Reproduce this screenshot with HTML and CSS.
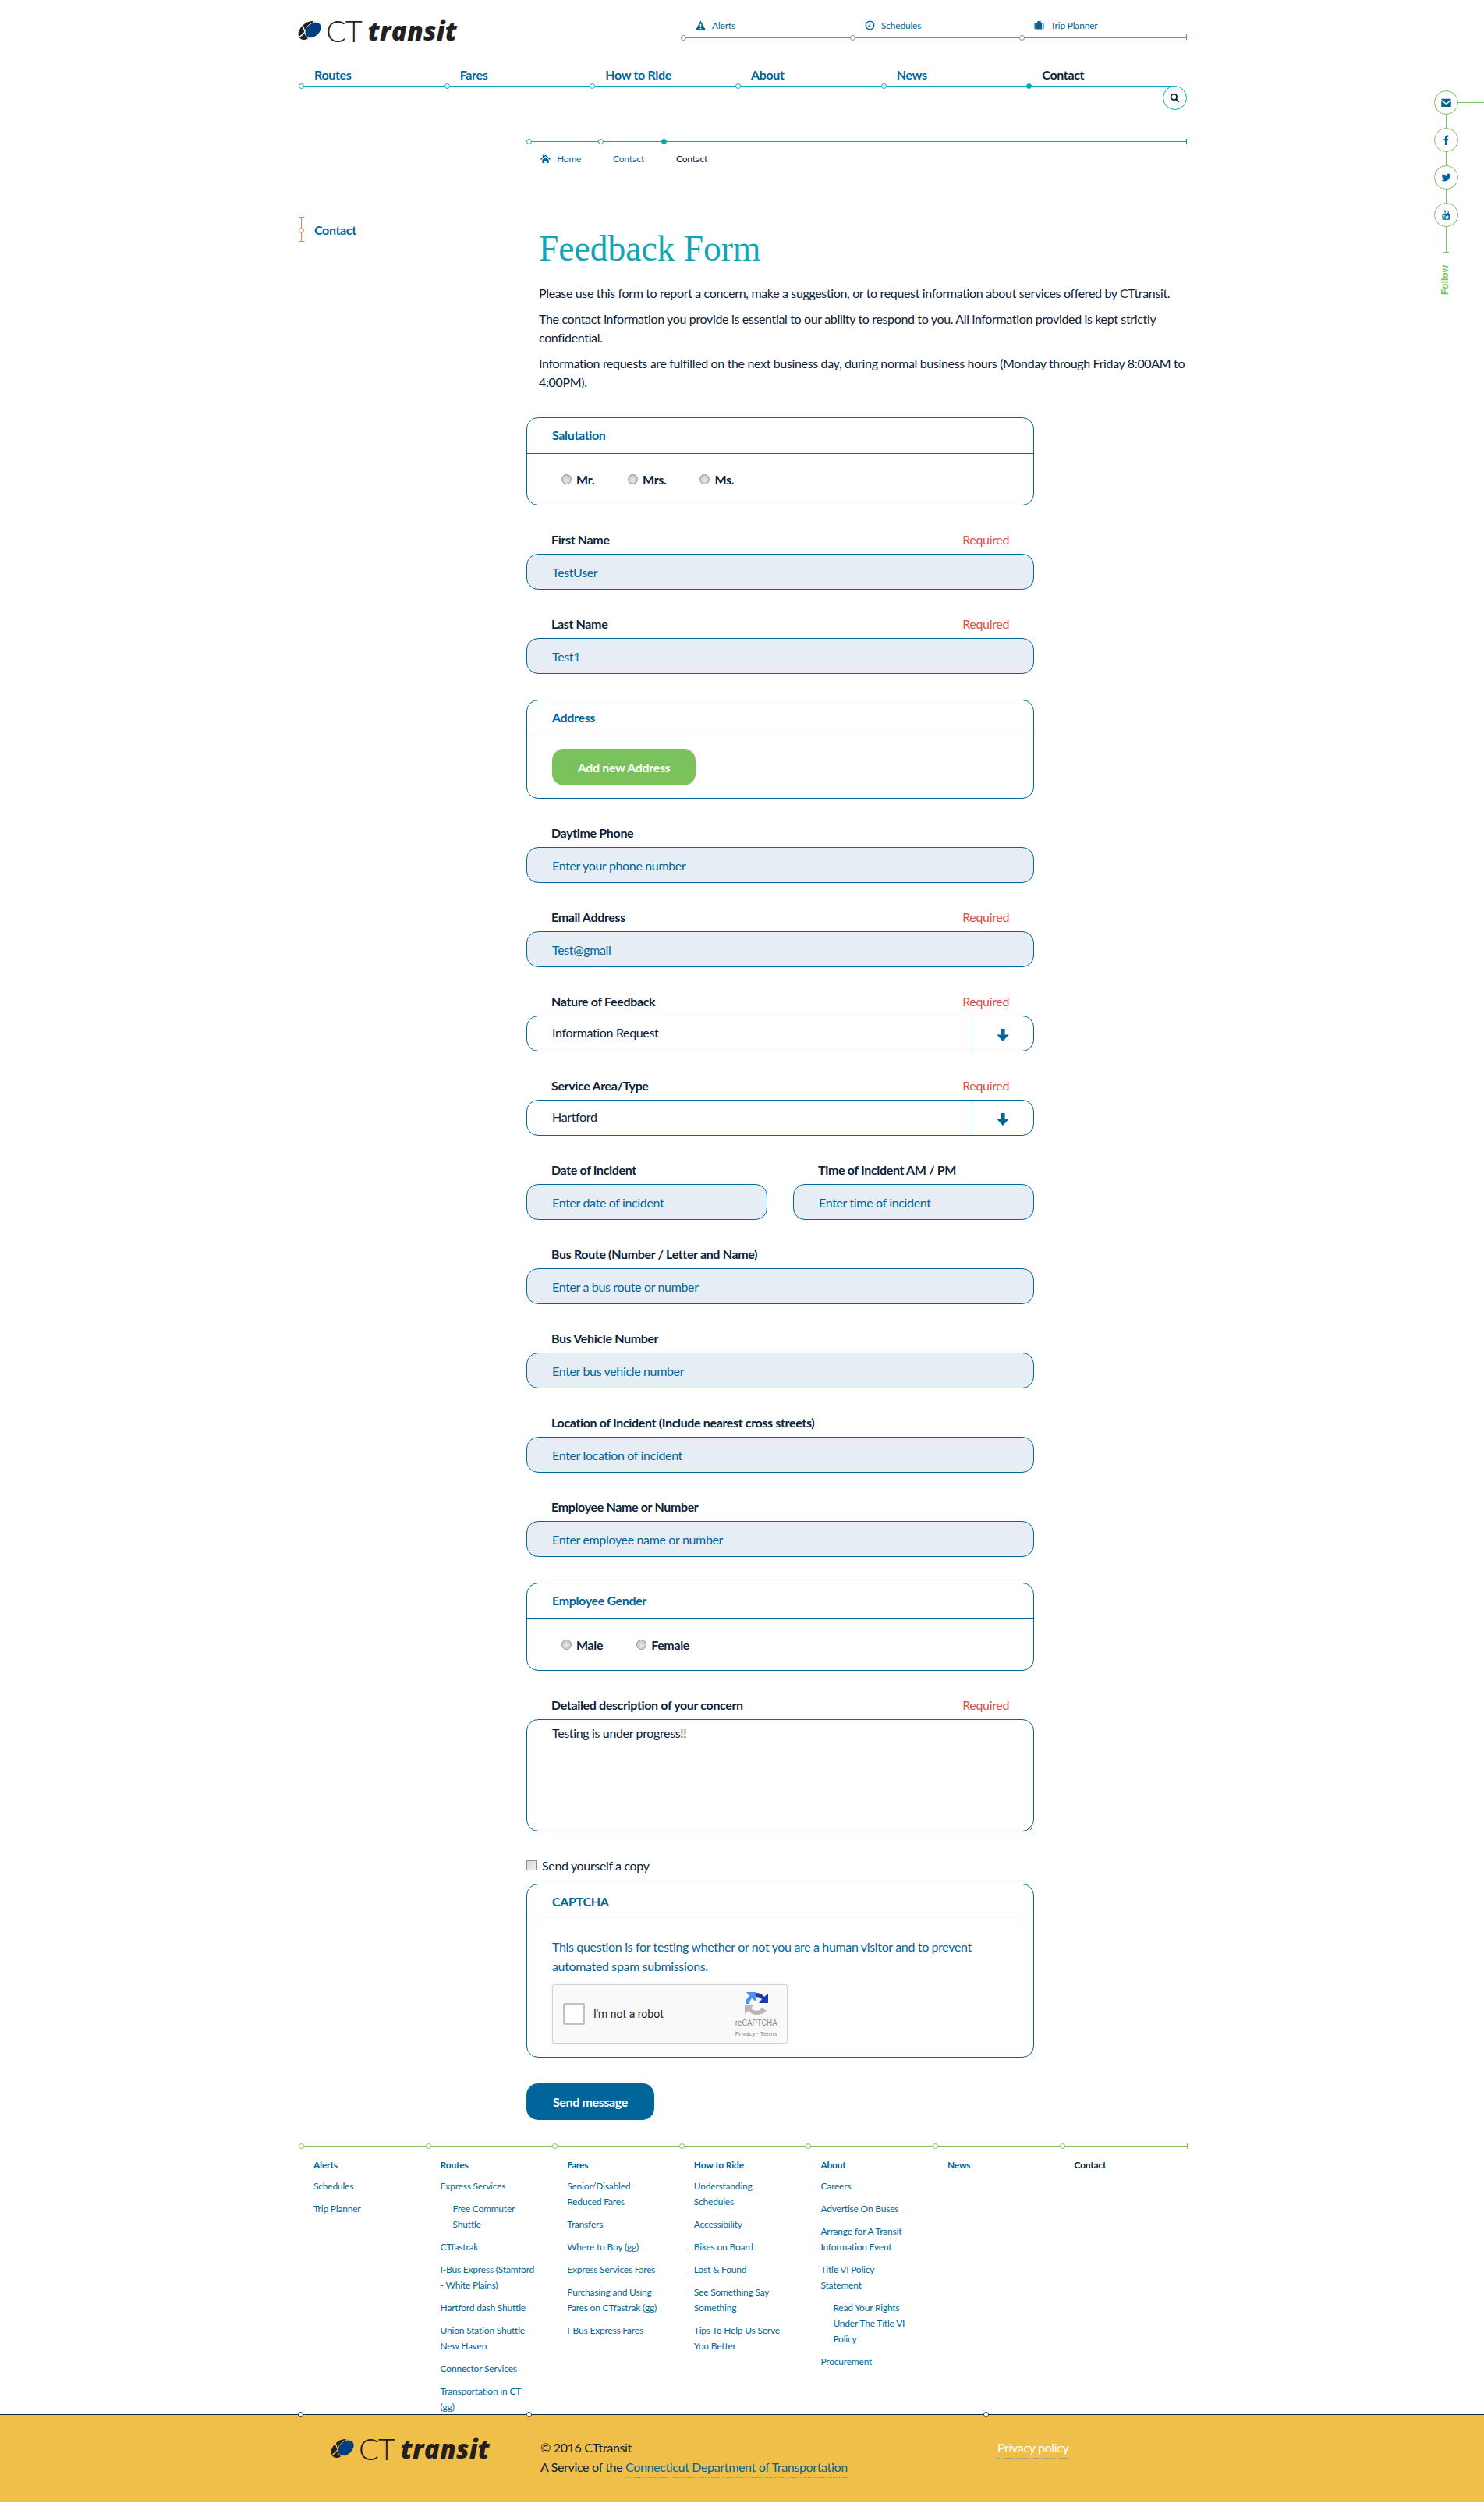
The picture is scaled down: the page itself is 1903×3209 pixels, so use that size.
FILE: index.html
```html
<!DOCTYPE html>
<html>

<head>
  <meta charset="utf-8">
  <title>Feedback Form</title>
  <link rel="stylesheet" href="styles.css">
</head>

<body>
  <div class="page">
    <header class="top">
      <a class="logo" href="#">
        <svg class="logo-mark" viewBox="0 0 30 26">
          <ellipse cx="13" cy="13" rx="14.5" ry="9.5" fill="#231f20" transform="rotate(-42 13 13)" />
          <path d="M5 0 Q7 14 15 26 M0 23 Q10 16 21 1" stroke="#fff" stroke-width="1.4" fill="none" />
          <ellipse cx="19.5" cy="12.5" rx="12" ry="8.5" fill="#003f7f" stroke="#fff" stroke-width="0.8" transform="rotate(-42 19.5 12.5)" />
        </svg>
        <span class="logo-ct">CT</span>
        <span class="logo-transit">transit</span>
      </a>
      <ul class="util">
        <li>
          <svg class="ico" viewBox="0 0 14 14"><path fill-rule="evenodd" d="M7 0.5 L14 13.5 H0 Z M6 5 L6.3 9.5 H7.7 L8 5 Z M6.1 10.5 V12.2 H7.9 V10.5 Z" /></svg>
          <a href="#">Alerts</a>
        </li>
        <li>
          <svg class="ico" viewBox="0 0 14 14"><circle cx="7" cy="7" r="5.6" fill="none" stroke="#00659b" stroke-width="1.6" /><path d="M7 3.6 V7.6 H4.6" fill="none" stroke="#00659b" stroke-width="1.4" /></svg>
          <a href="#">Schedules</a>
        </li>
        <li>
          <svg class="ico" viewBox="0 0 14 14"><path d="M0.5 5 Q0.5 3.5 2 3.5 V12.5 Q0.5 12.5 0.5 11 Z M3 3.5 H4.5 V2 Q4.5 1 5.5 1 H8.5 Q9.5 1 9.5 2 V3.5 H11 V12.5 H3 Z M12 3.5 Q13.5 3.5 13.5 5 V11 Q13.5 12.5 12 12.5 Z" /></svg>
          <a href="#">Trip Planner</a>
        </li>
      </ul>
    </header>

    <nav class="main-nav">
      <ul>
        <li><a href="#">Routes</a></li>
        <li><a href="#">Fares</a></li>
        <li><a href="#">How to Ride</a></li>
        <li><a href="#">About</a></li>
        <li><a href="#">News</a></li>
        <li class="current"><a href="#">Contact</a></li>
      </ul>
      <button class="search-btn" aria-label="Search">
        <svg viewBox="0 0 14 14"><circle cx="5.8" cy="5.8" r="4" fill="none" stroke="#0b2239" stroke-width="2" /><path d="M8.8 8.8 L12.6 12.6" stroke="#0b2239" stroke-width="2.4" /></svg>
      </button>
    </nav>

    <ul class="crumbs">
      <li>
        <svg class="ico" viewBox="0 0 14 14"><path d="M7 1.5 L14 7.6 L13 8.6 L7 3.4 L1 8.6 L0 7.6 L3 5 V2 H4.8 V3.4 Z M2.5 8.6 L7 4.8 L11.5 8.6 V13 H8.4 V9.8 H5.6 V13 H2.5 Z" /></svg>
        <a href="#">Home</a>
      </li>
      <li><a href="#">Contact</a></li>
      <li class="current"><a href="#">Contact</a></li>
    </ul>

    <div class="layout">
      <aside class="side">
        <a href="#">Contact</a>
      </aside>

      <main class="content">
        <h1>Feedback Form</h1>
        <p class="intro">Please use this form to report a concern, make a suggestion, or to request information about services offered by CTtransit.</p>
        <p class="intro">The contact information you provide is essential to our ability to respond to you. All information provided is kept strictly confidential.</p>
        <p class="intro last">Information requests are fulfilled on the next business day, during normal business hours (Monday through Friday 8:00AM to 4:00PM).</p>

        <form>
          <fieldset class="box">
            <legend class="box-title">Salutation</legend>
            <div class="radios">
              <label><input type="radio" name="sal"> Mr.</label>
              <label><input type="radio" name="sal"> Mrs.</label>
              <label><input type="radio" name="sal"> Ms.</label>
            </div>
          </fieldset>

          <div class="field">
            <div class="field-label"><label>First Name</label><span class="req">Required</span></div>
            <input class="text" value="TestUser">
          </div>
          <div class="field">
            <div class="field-label"><label>Last Name</label><span class="req">Required</span></div>
            <input class="text" value="Test1">
          </div>

          <fieldset class="box">
            <legend class="box-title">Address</legend>
            <div class="box-body">
              <button type="button" class="btn-green">Add new Address</button>
            </div>
          </fieldset>

          <div class="field">
            <div class="field-label"><label>Daytime Phone</label></div>
            <input class="text" placeholder="Enter your phone number">
          </div>
          <div class="field">
            <div class="field-label"><label>Email Address</label><span class="req">Required</span></div>
            <input class="text" value="Test@gmail">
          </div>
          <div class="field">
            <div class="field-label"><label>Nature of Feedback</label><span class="req">Required</span></div>
            <div class="select">
              <span>Information Request</span>
              <div class="select-arrow"><svg viewBox="0 0 16 16"><path d="M5.4 0 H10.6 V7.5 H15.8 L8 16 L0.2 7.5 H5.4 Z" /></svg></div>
            </div>
          </div>
          <div class="field">
            <div class="field-label"><label>Service Area/Type</label><span class="req">Required</span></div>
            <div class="select">
              <span>Hartford</span>
              <div class="select-arrow"><svg viewBox="0 0 16 16"><path d="M5.4 0 H10.6 V7.5 H15.8 L8 16 L0.2 7.5 H5.4 Z" /></svg></div>
            </div>
          </div>

          <div class="field-pair">
            <div class="field">
              <div class="field-label"><label>Date of Incident</label></div>
              <input class="text" placeholder="Enter date of incident">
            </div>
            <div class="field">
              <div class="field-label"><label>Time of Incident AM / PM</label></div>
              <input class="text" placeholder="Enter time of incident">
            </div>
          </div>

          <div class="field">
            <div class="field-label"><label>Bus Route (Number / Letter and Name)</label></div>
            <input class="text" placeholder="Enter a bus route or number">
          </div>
          <div class="field">
            <div class="field-label"><label>Bus Vehicle Number</label></div>
            <input class="text" placeholder="Enter bus vehicle number">
          </div>
          <div class="field">
            <div class="field-label"><label>Location of Incident (Include nearest cross streets)</label></div>
            <input class="text" placeholder="Enter location of incident">
          </div>
          <div class="field">
            <div class="field-label"><label>Employee Name or Number</label></div>
            <input class="text" placeholder="Enter employee name or number">
          </div>

          <fieldset class="box">
            <legend class="box-title">Employee Gender</legend>
            <div class="radios">
              <label><input type="radio" name="gen"> Male</label>
              <label><input type="radio" name="gen"> Female</label>
            </div>
          </fieldset>

          <div class="field narrow">
            <div class="field-label"><label>Detailed description of your concern</label><span class="req">Required</span></div>
            <textarea class="area">Testing is under progress!!</textarea>
          </div>

          <label class="copy"><input type="checkbox"> Send yourself a copy</label>

          <fieldset class="box captcha">
            <legend class="box-title">CAPTCHA</legend>
            <div class="captcha-body">
              <p>This question is for testing whether or not you are a human visitor and to prevent automated spam submissions.</p>
              <div class="recaptcha">
                <span class="rc-check"></span>
                <span class="rc-label">I'm not a robot</span>
                <div class="rc-brand">
                  <svg viewBox="0 0 30 30">
                    <path d="M0 16 H12 L8 21 Q11 24 15 24 Q19 24 22 20 L28 24 Q23 29 15 29 Q9 29 5 24 L0 28 Z" fill="#b8b8b8" />
                    <path d="M1 15 Q1 9 6 5 L2 0 H14 V12 L9 8 Q6 11 6 15 Z" fill="#4a90f5" />
                    <path d="M15 1 Q21 1 25 6 L30 2 V14 H18 L22 9 Q19 6 15 6 Z" fill="#1c3aa9" />
                  </svg>
                  <span class="rc-name">reCAPTCHA</span>
                  <span class="rc-terms">Privacy - Terms</span>
                </div>
              </div>
            </div>
          </fieldset>

          <button type="button" class="btn-send">Send message</button>
        </form>
      </main>
    </div>

    <footer class="site-map">
      <div class="map-col">
        <h4>Alerts</h4>
        <ul>
          <li><a href="#">Schedules</a></li>
          <li><a href="#">Trip Planner</a></li>
        </ul>
      </div>
      <div class="map-col">
        <h4>Routes</h4>
        <ul>
          <li><a href="#">Express Services</a></li>
          <li class="sub"><a href="#">Free Commuter Shuttle</a></li>
          <li><a href="#">CTfastrak</a></li>
          <li><a href="#">I-Bus Express (Stamford - White Plains)</a></li>
          <li><a href="#">Hartford dash Shuttle</a></li>
          <li><a href="#">Union Station Shuttle New Haven</a></li>
          <li><a href="#">Connector Services</a></li>
          <li><a href="#">Transportation in CT (gg)</a></li>
        </ul>
      </div>
      <div class="map-col">
        <h4>Fares</h4>
        <ul>
          <li><a href="#">Senior/Disabled Reduced Fares</a></li>
          <li><a href="#">Transfers</a></li>
          <li><a href="#">Where to Buy (gg)</a></li>
          <li><a href="#">Express Services Fares</a></li>
          <li><a href="#">Purchasing and Using Fares on CTfastrak (gg)</a></li>
          <li><a href="#">I-Bus Express Fares</a></li>
        </ul>
      </div>
      <div class="map-col">
        <h4>How to Ride</h4>
        <ul>
          <li><a href="#">Understanding Schedules</a></li>
          <li><a href="#">Accessibility</a></li>
          <li><a href="#">Bikes on Board</a></li>
          <li><a href="#">Lost &amp; Found</a></li>
          <li><a href="#">See Something Say Something</a></li>
          <li><a href="#">Tips To Help Us Serve You Better</a></li>
        </ul>
      </div>
      <div class="map-col">
        <h4>About</h4>
        <ul>
          <li><a href="#">Careers</a></li>
          <li><a href="#">Advertise On Buses</a></li>
          <li><a href="#">Arrange for A Transit Information Event</a></li>
          <li><a href="#">Title VI Policy Statement</a></li>
          <li class="sub"><a href="#">Read Your Rights Under The Title VI Policy</a></li>
          <li><a href="#">Procurement</a></li>
        </ul>
      </div>
      <div class="map-col">
        <h4>News</h4>
      </div>
      <div class="map-col current">
        <h4>Contact</h4>
      </div>
    </footer>
  </div>

  <footer class="band">
    <div class="band-logo">
      <a class="logo" href="#">
        <svg class="logo-mark" viewBox="0 0 30 26">
          <ellipse cx="13" cy="13" rx="14.5" ry="9.5" fill="#231f20" transform="rotate(-42 13 13)" />
          <path d="M5 0 Q7 14 15 26 M0 23 Q10 16 21 1" stroke="#f0bf4a" stroke-width="1.4" fill="none" />
          <ellipse cx="19.5" cy="12.5" rx="12" ry="8.5" fill="#003f7f" stroke="#f0bf4a" stroke-width="0.8" transform="rotate(-42 19.5 12.5)" />
        </svg>
        <span class="logo-ct">CT</span>
        <span class="logo-transit">transit</span>
      </a>
    </div>
    <div class="band-text">
      <p>© 2016 CTtransit</p>
      <p>A Service of the <a href="#">Connecticut Department of Transportation</a></p>
    </div>
    <div class="band-links">
      <a href="#">Privacy policy</a>
    </div>
  </footer>

  <aside class="follow">
    <a href="#" class="follow-btn">
      <svg viewBox="0 0 14 14"><path d="M1 2 H13 Q13.8 2 13.8 3 L7 7.8 L0.2 3 Q0.2 2 1 2 Z M0.2 4.8 L7 9.6 L13.8 4.8 V12 Q13.8 13 12.8 13 H1.2 Q0.2 13 0.2 12 Z" /></svg>
    </a>
    <a href="#" class="follow-btn">
      <svg viewBox="0 0 14 14"><path d="M5.4 14 V7.8 H3.8 V5.4 H5.4 V3.6 Q5.4 0.6 8.2 0.6 H10 V3 H8.9 Q7.9 3 7.9 4 V5.4 H10 L9.7 7.8 H7.9 V14 Z" /></svg>
    </a>
    <a href="#" class="follow-btn">
      <svg viewBox="0 0 14 14"><path d="M13.6 3 Q12.9 3.3 12.2 3.4 Q13 2.9 13.2 2 Q12.5 2.4 11.7 2.6 Q10.9 1.7 9.8 1.7 Q7.4 1.9 7.2 4.4 L7.3 5 Q3.8 4.8 1.5 2.2 Q0.4 4.4 2.2 5.9 Q1.6 5.9 1 5.6 Q1 7.6 3.1 8.2 Q2.5 8.4 1.9 8.2 Q2.5 9.8 4.3 10 Q2.6 11.3 0.4 11.1 Q2.6 12.4 4.6 12.4 Q11.8 12.2 12.3 4.4 Q13.1 3.8 13.6 3 Z" /></svg>
    </a>
    <a href="#" class="follow-btn">
      <svg viewBox="0 0 14 14"><path fill-rule="evenodd" d="M4 0.5 H5 L5.6 2.4 L6.2 0.5 H7.1 L6 3.6 V5.4 H5.1 V3.6 Z M8 1.6 H9 V4.4 H9.8 V1.6 H10.6 V5.4 H9.8 V5 Q8 5.9 8 4.4 Z M3 6.4 H11 Q12.5 6.4 12.5 8 V12 Q12.5 13.6 11 13.6 H3 Q1.5 13.6 1.5 12 V8 Q1.5 6.4 3 6.4 Z M3 7.6 V8.4 H3.8 V12.4 H4.7 V8.4 H5.5 V7.6 Z M6 9 V12.4 H7.8 V9 H7 V11.7 H6.8 V9 Z M8.4 7.6 V12.4 H10.2 V9 H9.2 V7.6 Z" /></svg>
    </a>
    <span class="follow-tail"></span>
    <span class="follow-label">Follow</span>
  </aside>
</body>

</html>
```

FILE: styles.css
```css
html,
body {
  margin: 0;
  padding: 0;
}

body {
  position: relative;
  min-height: 3209px;
  font-family: "Lato", "Noto Sans", sans-serif;
  font-size: 16px;
  letter-spacing: -0.35px;
  color: #0b2239;
  background-color: white;
  overflow-x: hidden;
}

a {
  color: #00659b;
  text-decoration: none;
}

ul {
  list-style: none;
  margin: 0;
  padding: 0;
}

.page {
  width: 1136px;
  margin-left: 386px;
}

.ico {
  width: 13px;
  height: 13px;
  fill: #00659b;
  flex: none;
}

/* header */
.top {
  display: flex;
  justify-content: space-between;
  height: 84px;
}

.logo {
  display: flex;
  align-items: center;
  height: 26px;
  margin-top: 26px;
  margin-left: -4px;
  color: #231f20;
}

.logo-mark {
  width: 30px;
  height: 26px;
}

.logo-ct {
  margin-left: 6px;
  font-family: "Lato", sans-serif;
  font-size: 38px;
  font-weight: 300;
  letter-spacing: -1px;
}

.logo-transit {
  margin-left: 8px;
  font-family: "Open Sans", sans-serif;
  font-size: 33px;
  font-weight: 800;
  font-style: italic;
  letter-spacing: 0.3px;
}

.util {
  display: flex;
  width: 646px;
  height: 48px;
  border-bottom: 1px solid #a86cb8;
}

.util li {
  position: relative;
  display: flex;
  align-items: center;
  gap: 8px;
  width: 217px;
  height: 48px;
  padding: 16px 0 0 16px;
  box-sizing: border-box;
  font-size: 12px;
  letter-spacing: -0.2px;
}

.util li::after {
  content: "";
  position: absolute;
  left: -3px;
  bottom: -4px;
  width: 5px;
  height: 5px;
  border: 1px solid #a86cb8;
  border-radius: 50%;
  background: white;
}

.util li:last-child {
  width: 212px;
}

.util li:last-child::before {
  content: "";
  position: absolute;
  right: 0;
  bottom: -3px;
  width: 1px;
  height: 7px;
  background-color: #a86cb8;
}

/* main nav */
.main-nav {
  position: relative;
  height: 26px;
}

.main-nav ul {
  display: flex;
  width: 1120px;
  height: 26px;
  border-bottom: 1px solid #00a9b9;
}

.main-nav li {
  position: relative;
  width: 187px;
  padding-left: 17px;
  box-sizing: border-box;
  font-size: 16px;
  font-weight: 700;
  line-height: 24px;
}

.main-nav li::after,
.crumbs li::after {
  content: "";
  position: absolute;
  left: -3px;
  bottom: -4px;
  width: 5px;
  height: 5px;
  border: 1px solid #00a9b9;
  border-radius: 50%;
  background: white;
}

.main-nav li.current a,
.crumbs li.current a {
  color: #0b2239;
}

.main-nav li.current::after,
.crumbs li.current::after {
  background: #00a9b9;
}

.search-btn {
  position: absolute;
  right: 0;
  top: 26px;
  display: flex;
  align-items: center;
  justify-content: center;
  width: 31px;
  height: 31px;
  padding: 0;
  border: 1px solid #00a9b9;
  border-radius: 50%;
  background: white;
}

.search-btn svg {
  width: 13px;
  height: 13px;
}

/* breadcrumb */
.crumbs {
  position: relative;
  display: flex;
  height: 34px;
  margin: 71px 0 0 292px;
  border-top: 1px solid #00a9b9;
  font-size: 12px;
  letter-spacing: -0.2px;
}

.crumbs::after {
  content: "";
  position: absolute;
  right: 0;
  top: -4px;
  width: 1px;
  height: 7px;
  background-color: #00a9b9;
}

.crumbs li {
  position: relative;
  display: flex;
  align-items: center;
  gap: 8px;
  height: 42px;
  padding-left: 16px;
  box-sizing: border-box;
}

.crumbs li:nth-child(1) {
  width: 92px;
  padding-left: 15px;
}

.crumbs li:nth-child(2) {
  width: 81px;
}

.crumbs li::after {
  top: -4px;
  bottom: auto;
}

/* two column layout */
.layout {
  display: grid;
  grid-template-columns: 289px 651px;
  margin-top: 62px;
}

.side {
  position: relative;
  height: 32px;
  padding-left: 16px;
  border-left: 1px solid #f08050;
  font-size: 16px;
  font-weight: 700;
  line-height: 33px;
  box-sizing: border-box;
}

.side::before {
  content: "";
  position: absolute;
  left: -4px;
  top: 0;
  width: 7px;
  height: 30px;
  border-top: 1px solid #f08050;
  border-bottom: 1px solid #f08050;
}

.side::after {
  content: "";
  position: absolute;
  left: -4px;
  top: 14px;
  width: 5px;
  height: 5px;
  border: 1px solid #f08050;
  border-radius: 50%;
  background: white;
}

h1 {
  height: 50px;
  margin: 16px 0 20px;
  padding-left: 16px;
  font-family: "Liberation Serif", serif;
  font-size: 45.5px;
  font-weight: 400;
  line-height: 50px;
  letter-spacing: 0;
  color: #0ea5b7;
}

.intro {
  margin: 0 0 8px;
  padding-left: 16px;
  width: 846px;
  box-sizing: border-box;
  line-height: 24px;
  padding-bottom: 1px;
}

.intro.last {
  margin-bottom: 32px;
}

/* boxes */
.box {
  display: block;
  min-width: 0;
  margin: 0 0 33px;
  padding: 0;
  border: 1px solid #00659b;
  border-radius: 15px;
  position: relative;
}

.box-title {
  display: block;
  float: left;
  width: 100%;
  height: 46px;
  padding: 0 0 0 32px;
  box-sizing: border-box;
  border-bottom: 1px solid #00659b;
  font-weight: 700;
  line-height: 43px;
  color: #00659b;
}

.radios {
  clear: both;
  display: flex;
  gap: 43px;
  padding: 0 0 0 44px;
  height: 65px;
  align-items: center;
}

.radios label {
  display: flex;
  align-items: center;
  gap: 6px;
  font-weight: 700;
}

.radios input {
  appearance: none;
  width: 13px;
  height: 13px;
  margin: 0;
  border: 1px solid #8f8f8f;
  border-radius: 50%;
  background: radial-gradient(circle at 50% 60%, #e8e8e8, #bcbcbc);
}

.box-body {
  clear: both;
  padding: 16px 32px;
}

.btn-green {
  display: block;
  width: 184px;
  height: 47px;
  border: 0;
  border-radius: 15px;
  background-color: #7ac25c;
  font-family: inherit;
  font-size: 16px;
  font-weight: 700;
  letter-spacing: inherit;
  color: white;
}

/* form fields */
.field {
  margin-bottom: 33px;
}

.field-label {
  display: flex;
  justify-content: space-between;
  height: 29px;
  padding: 0 32px;
  line-height: 22px;
  font-weight: 700;
}

.req {
  font-weight: 400;
  color: #d9503f;
}

.text,
.area {
  display: block;
  width: 100%;
  height: 46px;
  padding: 0 32px;
  box-sizing: border-box;
  border: 1px solid #00659b;
  border-radius: 15px;
  background-color: #e6edf4;
  font-family: inherit;
  font-size: 16px;
  letter-spacing: inherit;
  color: #00659b;
  outline: none;
}

.text::placeholder {
  color: #00659b;
  opacity: 1;
}

.area {
  height: 144px;
  padding: 4px 32px;
  background-color: white;
  line-height: 25px;
  color: #0b2239;
}

.select {
  display: flex;
  align-items: center;
  justify-content: space-between;
  height: 46px;
  padding-left: 32px;
  box-sizing: border-box;
  border: 1px solid #00659b;
  border-radius: 15px;
}

.select span {
  margin-top: -3px;
}

.select-arrow {
  display: flex;
  align-items: center;
  justify-content: center;
  width: 78px;
  height: 100%;
  border-left: 1px solid #00659b;
}

.select-arrow svg {
  width: 16px;
  height: 16px;
  margin-top: 3px;
  fill: #00659b;
}

.field-pair {
  display: grid;
  grid-template-columns: 309px 309px;
  column-gap: 33px;
}

.copy {
  display: flex;
  align-items: center;
  gap: 7px;
  height: 24px;
  margin: -2px 0 12px;
}

.copy input {
  appearance: none;
  width: 13px;
  height: 13px;
  margin: 0;
  border: 1px solid #8f8f8f;
  background: linear-gradient(135deg, #d8d8d8, #f2f2f2);
}

.captcha-body {
  clear: both;
  padding: 21px 32px 17px;
  color: #00659b;
}

.captcha-body p {
  margin: 0 0 11px;
  line-height: 25px;
}

.recaptcha {
  display: flex;
  align-items: center;
  width: 302px;
  height: 76px;
  box-sizing: border-box;
  padding: 0 12px 0 13px;
  border: 1px solid #d3d3d3;
  border-radius: 3px;
  background-color: #f9f9f9;
  box-shadow: 0 0 4px rgba(0, 0, 0, 0.08);
  font-family: "Roboto", sans-serif;
  letter-spacing: 0;
}

.rc-check {
  width: 24px;
  height: 24px;
  border: 2px solid #c1c1c1;
  border-radius: 2px;
  background: white;
}

.rc-label {
  flex: 1;
  margin-left: 11px;
  font-size: 14px;
  color: #222;
}

.rc-brand {
  display: flex;
  flex-direction: column;
  align-items: center;
  margin-top: 4px;
  color: #8b8b8b;
}

.rc-brand svg {
  width: 30px;
  height: 30px;
}

.rc-name {
  margin-top: 3px;
  font-size: 10px;
  line-height: 13px;
}

.rc-terms {
  margin-top: 2px;
  font-size: 8px;
  line-height: 12px;
}

.btn-send {
  display: block;
  width: 164px;
  height: 47px;
  border: 0;
  border-radius: 15px;
  background-color: #00659b;
  font-family: inherit;
  font-size: 16px;
  font-weight: 700;
  letter-spacing: inherit;
  color: white;
}

/* site map */
.site-map {
  display: grid;
  grid-template-columns: repeat(7, 162.6px);
  height: 344px;
  box-sizing: border-box;
  margin-top: 33px;
  border-top: 1px solid #7ac25c;
  font-size: 12px;
  letter-spacing: -0.2px;
}

.map-col {
  position: relative;
  padding: 14px 26px 0 16px;
}

.map-col::before {
  content: "";
  position: absolute;
  left: -3px;
  top: -4px;
  width: 5px;
  height: 5px;
  border: 1px solid #7ac25c;
  border-radius: 50%;
  background: white;
}

.map-col:last-child::after {
  content: "";
  position: absolute;
  right: 1px;
  top: -4px;
  width: 1px;
  height: 7px;
  background-color: #7ac25c;
}

.map-col h4 {
  margin: 0 0 7px;
  font-size: 12px;
  line-height: 20px;
  color: #00659b;
}

.map-col.current h4 {
  color: #0b2239;
}

.map-col li {
  margin-bottom: 9px;
  line-height: 20px;
}

.map-col li.sub {
  padding-left: 16px;
}

/* yellow band */
.band {
  position: relative;
  display: flex;
  height: 113px;
  border-top: 1px solid #0e2a3f;
  box-sizing: border-box;
  background-color: #f0bf4a;
}

.band-logo {
  width: 693px;
  padding-left: 424px;
  box-sizing: border-box;
}

.band-logo .logo {
  margin-top: 30px;
  margin-left: 0;
}

.band-text {
  width: 586px;
  padding-top: 29px;
}

.band-text p {
  margin: 0;
  line-height: 25px;
}

.band-text a,
.band-links a {
  padding-bottom: 4px;
  border-bottom: 1px dotted #7a8fa0;
}

.band-links {
  padding-top: 29px;
  line-height: 25px;
}

.band-links a {
  color: white;
}

.band::before,
.band::after,
.band-text::before {
  content: "";
  position: absolute;
  top: -4px;
  left: 382px;
  width: 5px;
  height: 5px;
  border: 1px solid #0e2a3f;
  border-radius: 50%;
  background: white;
}

.band::after {
  left: 675px;
}

.band-text::before {
  left: 1261px;
}

/* social rail */
.follow {
  position: absolute;
  top: 116px;
  left: 1838px;
  width: 33px;
  display: flex;
  flex-direction: column;
  align-items: center;
  gap: 17px;
}

.follow::before {
  content: "";
  position: absolute;
  left: 16px;
  top: 0;
  width: 1px;
  height: 208px;
  background-color: #7ac25c;
}

.follow::after {
  content: "";
  position: absolute;
  left: 31px;
  top: 15px;
  width: 34px;
  height: 1px;
  background-color: #7ac25c;
}

.follow-btn {
  position: relative;
  display: flex;
  align-items: center;
  justify-content: center;
  width: 31px;
  height: 31px;
  border: 1px solid #7ac25c;
  border-radius: 50%;
  box-sizing: border-box;
  background: white;
}

.follow-btn svg {
  width: 13px;
  height: 13px;
  fill: #00659b;
}

.follow-tail {
  position: absolute;
  left: 13px;
  top: 207px;
  width: 7px;
  height: 1px;
  background-color: #7ac25c;
}

.follow-label {
  position: absolute;
  left: 8px;
  top: 224px;
  writing-mode: vertical-rl;
  transform: rotate(180deg);
  font-family: "Liberation Sans", sans-serif;
  font-size: 12px;
  font-weight: 700;
  letter-spacing: 0;
  color: #7ac25c;
}
```
